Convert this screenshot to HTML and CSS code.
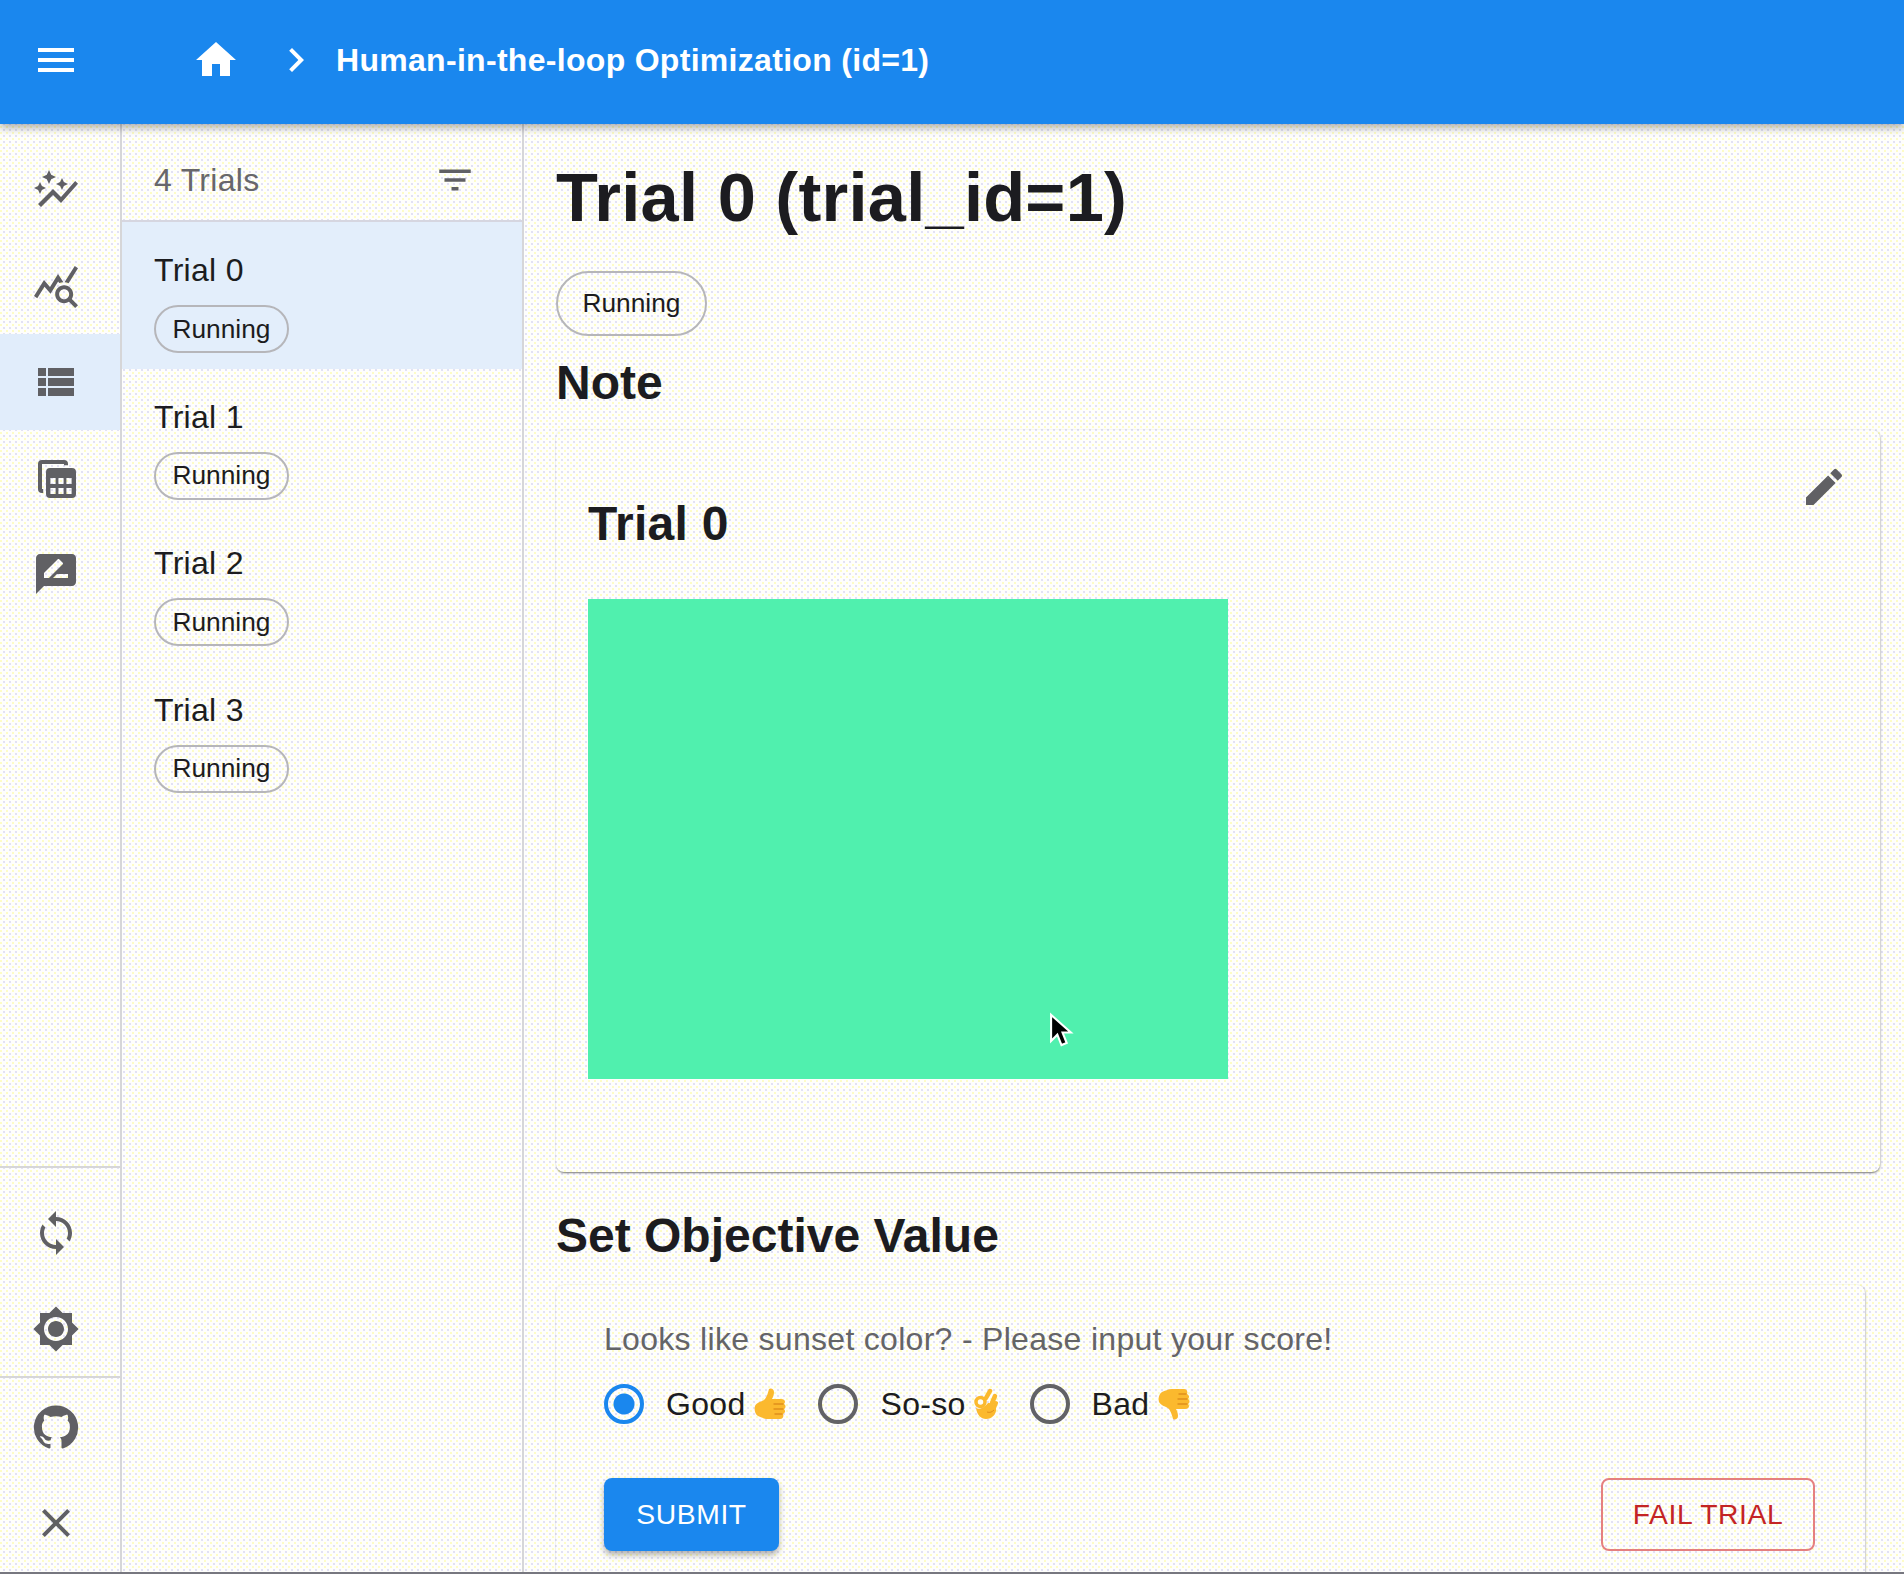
FILE: index.html
```html
<!DOCTYPE html>
<html lang="en">
<head>
  <meta charset="UTF-8" />
  <title>Human-in-the-loop Optimization</title>
  <meta name="viewport" content="width=device-width, initial-scale=1.0" />
  <link rel="stylesheet" href="styles.css">
</head>
<body>
  <header class="appbar">
    <svg class="icon menu-icon" viewBox="0 0 24 24"><path d="M3 18h18v-2H3v2zm0-5h18v-2H3v2zm0-7v2h18V6H3z"/></svg>
    <svg class="icon home-icon" viewBox="0 0 24 24"><path d="M10 20v-6h4v6h5v-8h3L12 3 2 12h3v8z"/></svg>
    <svg class="icon chevron-icon" viewBox="0 0 24 24"><path d="M10 6 8.59 7.41 13.17 12l-4.58 4.59L10 18l6-6z"/></svg>
    <span class="appbar-title">Human-in-the-loop Optimization (id=1)</span>
  </header>

  <div class="layout">
    <nav class="sidenav">
      <div class="nav-group">
        <a class="nav-item"><svg class="icon" viewBox="0 0 24 24"><path d="M14.06 9.94 12 9l2.06-.94L15 6l.94 2.06L18 9l-2.06.94L15 12zM4 14l.94-2.06L7 11l-2.06-.94L4 8l-.94 2.06L1 11l2.06.94zm4.5-5 1.09-2.41L12 5.5l-2.41-1.09L8.5 2 7.41 4.41 5 5.5l2.41 1.09zm-4 11.5 6-6.01 4 4L23 8.93l-1.41-1.41-7.09 7.97-4-4L3 19z"/></svg></a>
        <a class="nav-item"><svg class="icon" viewBox="0 0 24 24"><path d="M19.88 18.47c.44-.7.7-1.51.7-2.39 0-2.49-2.01-4.5-4.5-4.5s-4.5 2.01-4.5 4.5 2.01 4.5 4.49 4.5c.88 0 1.7-.26 2.39-.7L21.58 23 23 21.58zm-3.8.11c-1.38 0-2.5-1.12-2.5-2.5s1.12-2.5 2.5-2.5 2.5 1.12 2.5 2.5-1.12 2.5-2.5 2.5m-.36-8.5c-.74.02-1.45.18-2.1.45l-.55-.83-3.8 6.18-3.01-3.52-3.63 5.81L1 17l5-8 3 3.5L13 6zm2.59.5c-.64-.28-1.33-.45-2.05-.49L21.38 2 23 3.18z"/></svg></a>
        <a class="nav-item active"><svg class="icon" viewBox="0 0 24 24"><path d="M3 14h4v-4H3v4zm0 5h4v-4H3v4zM3 9h4V5H3v4zm5 5h13v-4H8v4zm0 5h13v-4H8v4zM8 5v4h13V5H8z"/></svg></a>
        <a class="nav-item"><svg class="icon" viewBox="0 0 24 24"><path d="M5 19.5a2 2 0 0 1-2-2V5a2 2 0 0 1 2-2h11a2 2 0 0 1 2 2v.6h-2V5H5v12.5h.6v2z"/><path fill-rule="evenodd" d="M9 7h11a2 2 0 0 1 2 2v11a2 2 0 0 1-2 2H9a2 2 0 0 1-2-2V9a2 2 0 0 1 2-2zm.2 5v3h2.600v-3zm4 0v3h2.600v-3zm4 0v3h2.600v-3zm-8 5v3h2.600v-3zm4 0v3h2.600v-3zm4 0v3h2.600v-3z"/></svg></a>
        <a class="nav-item"><svg class="icon" viewBox="0 0 24 24"><path d="M20 2H4c-1.1 0-1.99.9-1.99 2L2 22l4-4h14c1.1 0 2-.9 2-2V4c0-1.1-.9-2-2-2zM6 14v-2.47l6.88-6.88c.2-.2.51-.2.71 0l1.77 1.77c.2.2.2.51 0 .71L8.47 14H6zm12 0h-7.5l2-2H18v2z"/></svg></a>
      </div>
      <div class="nav-group nav-bottom">
        <a class="nav-item"><svg class="icon" viewBox="0 0 24 24"><path d="M12 4V1L8 5l4 4V6c3.31 0 6 2.69 6 6 0 1.01-.25 1.97-.7 2.8l1.46 1.46C19.54 15.03 20 13.57 20 12c0-4.42-3.58-8-8-8zm0 14c-3.31 0-6-2.69-6-6 0-1.01.25-1.97.7-2.8L5.24 7.74C4.46 8.97 4 10.43 4 12c0 4.42 3.58 8 8 8v3l4-4-4-4v3z"/></svg></a>
        <a class="nav-item"><svg class="icon" viewBox="0 0 24 24"><path d="M20 8.69V4h-4.69L12 .69 8.69 4H4v4.69L.69 12 4 15.31V20h4.69L12 23.31 15.31 20H20v-4.69L23.31 12 20 8.69zM12 18c-3.31 0-6-2.69-6-6s2.69-6 6-6 6 2.69 6 6-2.69 6-6 6zm0-10c-2.21 0-4 1.79-4 4s1.79 4 4 4 4-1.79 4-4-1.79-4-4-4z"/></svg></a>
      </div>
      <div class="nav-group nav-links">
        <a class="nav-item"><svg class="icon" viewBox="0 0 24 24"><path d="M12 1.27a11 11 0 00-3.48 21.46c.55.09.73-.28.73-.55v-1.84c-3.03.64-3.67-1.46-3.67-1.46-.55-1.29-1.28-1.65-1.28-1.65-.92-.65.1-.65.1-.65 1.1 0 1.73 1.1 1.73 1.1.92 1.65 2.56 1.2 3.21.92a2 2 0 01.64-1.47c-2.47-.27-5.04-1.19-5.04-5.5 0-1.1.46-2.1 1.2-2.84a3.76 3.76 0 010-2.93s.91-.28 3.11 1.1c1.8-.49 3.7-.49 5.5 0 2.1-1.38 3.02-1.1 3.02-1.1a3.76 3.76 0 010 2.93c.83.74 1.2 1.74 1.2 2.94 0 4.21-2.57 5.13-5.04 5.4.45.37.82.92.82 2.02v3.03c0 .27.1.64.73.55A11 11 0 0012 1.27"/></svg></a>
        <a class="nav-item"><svg class="icon" viewBox="0 0 24 24"><path d="M19 6.41 17.59 5 12 10.59 6.41 5 5 6.41 10.59 12 5 17.59 6.41 19 12 13.41 17.59 19 19 17.59 13.41 12z"/></svg></a>
      </div>
    </nav>

    <aside class="trial-list">
      <div class="list-head">
        <span class="list-count">4 Trials</span>
        <svg class="icon filter-icon" viewBox="0 0 24 24"><path d="M10 18h4v-2h-4v2zM3 6v2h18V6H3zm3 7h12v-2H6v2z"/></svg>
      </div>
      <div class="list-item selected"><span class="item-name">Trial 0</span><span class="chip">Running</span></div>
      <div class="list-item"><span class="item-name">Trial 1</span><span class="chip">Running</span></div>
      <div class="list-item"><span class="item-name">Trial 2</span><span class="chip">Running</span></div>
      <div class="list-item"><span class="item-name">Trial 3</span><span class="chip">Running</span></div>
    </aside>

    <main class="detail">
      <h1 class="detail-title">Trial 0 (trial_id=1)</h1>
      <span class="chip chip-large">Running</span>
      <h2 class="section-title note-title">Note</h2>

      <section class="card note-card">
        <svg class="icon edit-icon" viewBox="0 0 24 24"><path d="M3 17.25V21h3.75L17.81 9.94l-3.75-3.75L3 17.25zM20.71 7.04c.39-.39.39-1.02 0-1.41l-2.34-2.34a.9959.9959 0 00-1.41 0l-1.83 1.83 3.75 3.75 1.83-1.83z"/></svg>
        <h3 class="note-heading">Trial 0</h3>
        <div class="swatch"></div>
      </section>

      <h2 class="section-title objective-title">Set Objective Value</h2>

      <section class="card objective-card">
        <p class="question">Looks like sunset color? - Please input your score!</p>
        <div class="radios">
          <label class="radio-option"><span class="radio checked"></span><span class="radio-label">Good</span>
            <svg class="emoji" viewBox="0 0 32 32"><path fill="#fbb92e" d="M1 18C3 14 8 14 11 11 13 8 14 5 15 1c2-1.500 5 0 5 3 0 3-1 5-2 7h9c4 0 5 3 3 5 2 1 2 4 0 5 2 2 1 4-1 5 1 2 0 5-3 5H14c-4 0-7-2-10-3-3-2-4-6-3-10z"/><path fill="none" stroke="#e08e1c" stroke-width="1.300" stroke-linecap="round" d="M20 16h9M20 21h9M21 26h7"/></svg>
          </label>
          <label class="radio-option"><span class="radio"></span><span class="radio-label tight">So-so</span>
            <svg class="emoji emoji-ok" viewBox="0 0 26 32"><g fill="none" stroke="#fbb92e" stroke-linecap="round"><path stroke-width="4.500" d="M14 10 18 3"/><path stroke-width="4.500" d="M20 15l3-7"/><path stroke-width="4" d="M22 20l2-5"/></g><path fill="#fbb92e" d="M4 20c3 2 8 0 12-5 3 0 7 1 8 5 1 6-4 11-10 11-5 0-9-4-10-11z"/><circle cx="8.500" cy="14" r="4.500" fill="#fffef6" stroke="#fbb92e" stroke-width="3.500"/><path fill="none" stroke="#e08e1c" stroke-width="1" d="M15 24c3 1 5 0 7-2"/></svg>
          </label>
          <label class="radio-option"><span class="radio"></span><span class="radio-label">Bad</span>
            <svg class="emoji" viewBox="0 0 32 32"><path fill="#fbb92e" d="M1 14C3 18 8 18 11 21 13 24 14 27 15 31c2 1.500 5 0 5-3 0-3-1-5-2-7h9c4 0 5-3 3-5 2-1 2-4 0-5 2-2 1-4-1-5 1-2 0-5-3-5H14c-4 0-7 2-10 3-3 2-4 6-3 10z"/><path fill="none" stroke="#e08e1c" stroke-width="1.300" stroke-linecap="round" d="M20 16h9M20 11h9M21 6h7"/></svg>
          </label>
        </div>
        <div class="actions">
          <button class="btn btn-submit">SUBMIT</button>
          <button class="btn btn-fail">FAIL TRIAL</button>
        </div>
      </section>
    </main>
  </div>

  <svg class="cursor" viewBox="0 0 24 34"><path fill="#000" stroke="#fff" stroke-width="2" d="M2 2v25l6-6 4 10 5-2-4-10h8z"/></svg>
</body>
</html>
```

FILE: styles.css
```css
* {
  box-sizing: border-box;
}

html, body {
  height: 100%;
}

body {
  margin: 0;
  height: 1574px;
  overflow: hidden;
  display: flex;
  flex-direction: column;
  font-family: "Liberation Sans", Arial, sans-serif;
  letter-spacing: 0.3px;
  color: #1c1c20;
  background-color: #fefefc;
  background-image:
    radial-gradient(circle at 1px 1px, #fdfcc6 0.7px, transparent 1px),
    radial-gradient(circle at 4px 4px, #e2e1f4 0.7px, transparent 1px);
  background-size: 6px 6px;
  border-bottom: 2px solid #77777f;
}

.icon {
  display: block;
  width: 48px;
  height: 48px;
  fill: #606064;
  flex: none;
}

/* top bar */
.appbar {
  height: 124px;
  flex: none;
  display: flex;
  align-items: center;
  padding: 0 0 4px 32px;
  background: #1a87ee;
  box-shadow: 0 4px 8px rgba(0, 0, 0, 0.3);
  position: relative;
  z-index: 2;
  color: #fff;
}

.appbar .icon {
  fill: #fff;
}

.menu-icon {
  margin-right: 112px;
}

.chevron-icon {
  margin-left: 32px;
  margin-right: 16px;
}

.appbar-title {
  font-size: 32px;
  font-weight: 700;
}

.layout {
  flex: 1;
  min-height: 0;
  display: flex;
}

/* left icon rail */
.sidenav {
  width: 122px;
  flex: none;
  display: flex;
  flex-direction: column;
  border-right: 2px solid #d6d6d8;
}

.nav-group {
  display: flex;
  flex-direction: column;
  padding-top: 18px;
}

.nav-bottom {
  margin-top: auto;
  padding-top: 16px;
  border-top: 2px solid #d6d6d8;
}

.nav-bottom .nav-item {
  padding-top: 2px;
}

.nav-links {
  padding: 1px 0 1px;
  border-top: 2px solid #d6d6d8;
}

.nav-item {
  height: 96px;
  display: flex;
  align-items: center;
  padding-left: 32px;
}

.nav-item.active {
  background: #e1edfb;
}

/* trial list */
.trial-list {
  width: 402px;
  flex: none;
  border-right: 2px solid #d6d6d8;
}

.list-head {
  height: 98px;
  display: flex;
  align-items: center;
  justify-content: space-between;
  padding: 16px 46px 0 32px;
  border-bottom: 2px solid #d6d6e0;
}

.filter-icon {
  width: 42px;
  height: 42px;
}

.list-count {
  font-size: 32px;
  color: #67676b;
}

.list-item {
  height: 146.5px;
  padding-top: 30px;
  display: flex;
  flex-direction: column;
  align-items: flex-start;
  padding-left: 32px;
}

.list-item.selected {
  background: #e3eefb;
}

.item-name {
  font-size: 32px;
  line-height: 37px;
  margin-bottom: 16px;
}

.chip {
  display: inline-flex;
  align-items: center;
  height: 48px;
  padding: 0 16.5px;
  font-size: 26.3px;
  letter-spacing: 0;
  color: #1c1c20;
  border: 2px solid #b6b6ba;
  border-radius: 24px;
}

.chip-large {
  height: 65px;
  padding: 0 24.5px;
  border-radius: 33px;
}

/* detail pane */
.detail {
  flex: 1;
  min-width: 0;
  padding: 34px 24px 0 32px;
  overflow: hidden;
}

.detail-title {
  margin: 0 0 33px;
  font-size: 68.6px;
  line-height: 80px;
  letter-spacing: 0.25px;
  font-weight: 700;
}

.section-title {
  margin: 0;
  font-size: 48px;
  line-height: 56px;
  letter-spacing: 0;
  font-weight: 700;
}

.note-title {
  margin-top: 19px;
}

.objective-title {
  margin-top: 36px;
}

.card {
  position: relative;
  border-radius: 8px;
  box-shadow: 0 2px 2px -1px rgba(0, 0, 0, 0.4), 1px 1px 2px rgba(0, 0, 0, 0.16), 0 0 2px rgba(0, 0, 0, 0.1);
}

.note-card {
  height: 742px;
  margin-top: 19px;
  padding: 66px 32px 0;
}

.edit-icon {
  position: absolute;
  top: 33px;
  right: 32px;
}

.note-heading {
  margin: 0 0 47px;
  font-size: 48px;
  line-height: 56px;
  font-weight: 700;
}

.swatch {
  width: 640px;
  height: 480px;
  background: #50f0ae;
}

.objective-card {
  width: 1309px;
  margin-top: 21px;
  padding: 36px 50px 0 48px;
  height: 300px;
}

.question {
  margin: 0 0 25px;
  font-size: 32px;
  line-height: 37px;
  color: #646468;
}

.radios {
  display: flex;
  gap: 32px;
  height: 42px;
}

.radio-option {
  display: flex;
  align-items: center;
  font-size: 32px;
}

.radio {
  width: 40px;
  height: 40px;
  margin-right: 22px;
  border: 4px solid #626266;
  border-radius: 50%;
}

.radio.checked {
  border-color: #1a87ee;
  background: radial-gradient(circle, #1a87ee 0 10px, transparent 11px);
}

.radio-label {
  margin-right: 9px;
}

.radio-label.tight {
  margin-right: 6px;
}

.emoji {
  width: 32px;
  height: 32px;
}

.emoji-ok {
  width: 26px;
}

.actions {
  display: flex;
  justify-content: space-between;
  margin-top: 53px;
}

.btn {
  height: 73px;
  font-family: inherit;
  font-size: 28.3px;
  letter-spacing: 0.6px;
  border-radius: 8px;
}

.btn-submit {
  width: 175px;
  color: #fff;
  background: #1a87ee;
  border: 0;
  box-shadow: 0 4px 6px rgba(0, 0, 0, 0.3);
}

.btn-fail {
  width: 214px;
  color: #c42424;
  background: transparent;
  border: 2px solid #e58080;
}

/* mouse pointer caught in the capture */
.cursor {
  position: absolute;
  left: 1049px;
  top: 1012px;
  width: 25px;
  height: 37px;
}
```
